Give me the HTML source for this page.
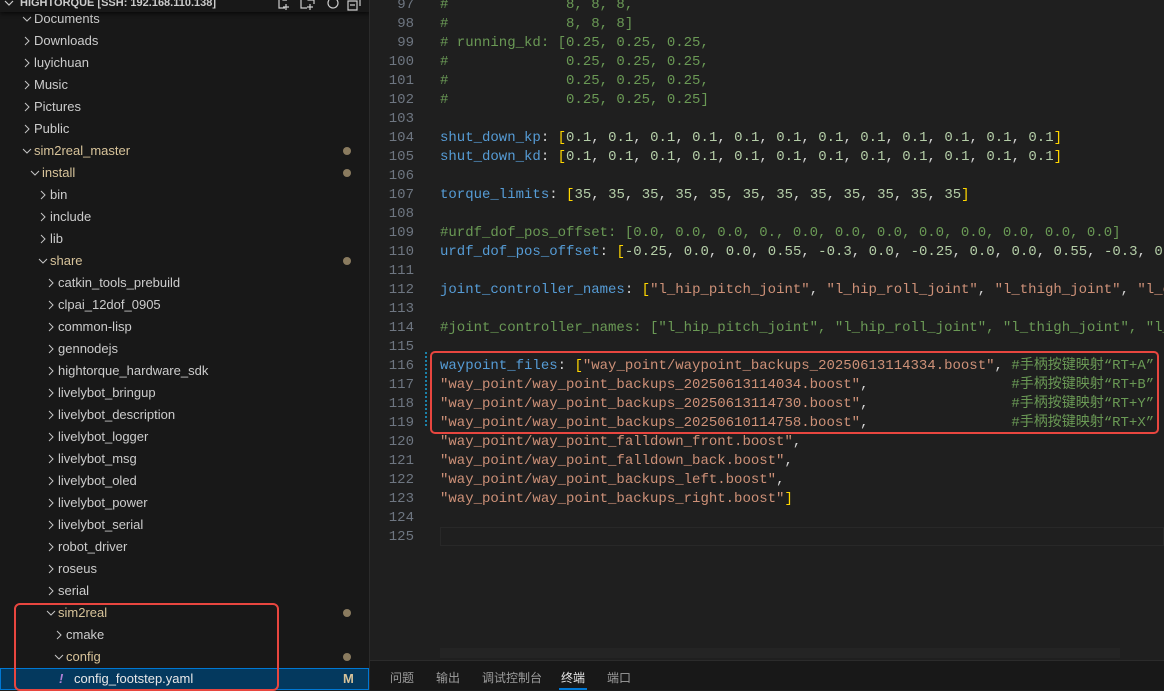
<!DOCTYPE html>
<html><head><meta charset="utf-8"><style>
*{margin:0;padding:0;box-sizing:border-box}
body{width:1164px;height:690px;overflow:hidden;background:#1f1f1f;font-family:"Liberation Sans","Noto Sans CJK SC",sans-serif;position:relative}
#side{position:absolute;left:0;top:0;width:370px;height:690px;background:#181818;overflow:hidden;border-right:1px solid #2b2b2b}
.row{position:absolute;left:0;width:369px;height:22px;line-height:22px;font-size:13px;color:#cccccc;white-space:nowrap}
.row .ch{position:absolute;top:0;color:#c5c5c5;font-size:12px}
.row .ch svg{position:absolute;top:6px}
.mod{color:#d7c39a}
.dot{position:absolute;left:343px;top:7px;width:8px;height:8px;border-radius:50%;background:#8a7b5f}
#hdr{position:absolute;left:0;top:0;width:370px;height:12px;background:#181818;box-shadow:0 2px 4px rgba(0,0,0,.6);z-index:2}
#hdr span{position:absolute;left:20px;top:-3px;font-size:11px;font-weight:bold;color:#cccccc}
#ed{position:absolute;left:370px;top:0;width:794px;height:660px;overflow:hidden;background:#1f1f1f}
.ln{position:absolute;left:0;width:44px;text-align:right;font-family:"Liberation Mono",monospace;font-size:14px;color:#6e7681;height:19px;line-height:19px}
.code{position:absolute;left:70px;font-family:"Liberation Mono",monospace;font-size:14px;height:19px;line-height:19px;white-space:pre;color:#d4d4d4}
.k{color:#569cd6}.s{color:#ce9178}.c{color:#6a9955}.n{color:#b5cea8}.b{color:#ffd700}
#panel{position:absolute;left:370px;top:660px;width:794px;height:30px;background:#181818;border-top:1px solid #2b2b2b}
#panel span{position:absolute;top:8px;font-size:12px;color:#9d9d9d}
</style></head><body>
<div id="side">
<div id="hdr"><svg style="position:absolute;left:4px;top:-1px" width="10" height="8"><path d="M1 2 L5 6 L9 2" stroke="#ccc" fill="none" stroke-width="1.2"/></svg><span>HIGHTORQUE [SSH: 192.168.110.138]</span>
<svg style="position:absolute;left:276px;top:-4px" width="90" height="16" fill="none" stroke="#ccc" stroke-width="1.2"><path d="M3 0 V12 H9 M7 0 V4 H11 M10 8 V14 M7 11 H13"/><path d="M25 2 H30 L32 4 H38 V8 M25 2 V12 H31 M34 8 V14 M31 11 H37"/><path d="M60 3 A5 5 0 1 1 53 4"/><path d="M74 3 H84 V10 M72 5 H81 V14 H72 Z M74 9 H79"/></svg></div>
<div class="row" style="top:8px"><span class="ch" style="left:22px"><svg width="10" height="10"><path d="M1 3 L5 7 L9 3" stroke="#c5c5c5" fill="none"/></svg></span><span style="position:absolute;left:34px">Documents</span></div>
<div id="rows"></div>
</div>
<div id="ed"></div>
<div id="panel"><span style="left:20px">问题</span><span style="left:66px">输出</span><span style="left:112px">调试控制台</span><span style="left:191px;color:#e7e7e7">终端</span><div style="position:absolute;left:189px;top:27px;width:28px;height:2px;background:#0078d4"></div><span style="left:237px">端口</span></div>
<div style="position:absolute;left:430px;top:351px;width:729px;height:83px;border:2px solid #e8463f;border-radius:5px"></div>
<div style="position:absolute;left:14px;top:603px;width:265px;height:88px;border:2px solid #e8463f;border-radius:6px"></div>
<script>
var R=[["Downloads",0,0],["luyichuan",0,0],["Music",0,0],["Pictures",0,0],["Public",0,0],["sim2real_master",0,1,1],["install",1,1,1],["bin",2,0],["include",2,0],["lib",2,0],["share",2,1,1],["catkin_tools_prebuild",3,0],["clpai_12dof_0905",3,0],["common-lisp",3,0],["gennodejs",3,0],["hightorque_hardware_sdk",3,0],["livelybot_bringup",3,0],["livelybot_description",3,0],["livelybot_logger",3,0],["livelybot_msg",3,0],["livelybot_oled",3,0],["livelybot_power",3,0],["livelybot_serial",3,0],["robot_driver",3,0],["roseus",3,0],["serial",3,0],["sim2real",3,1,1],["cmake",4,0],["config",4,1,1]];
var h="";
R.forEach(function(r,i){var top=30+i*22,x=22+r[1]*8;
var p=r[2]?"M1 3 L5 7 L9 3":"M3 1 L7 5 L3 9";
h+='<div class="row" style="top:'+top+'px"><span class="ch" style="left:'+x+'px"><svg width="10" height="10"><path d="'+p+'" stroke="#c5c5c5" fill="none"/></svg></span><span class="'+(r[3]?'mod':'')+'" style="position:absolute;left:'+(x+12)+'px">'+r[0]+'</span>'+(r[3]?'<div class="dot"></div>':'')+'</div>';});
h+='<div class="row" style="top:668px;background:#04395e;outline:1px solid #0078d4;outline-offset:-1px"><span style="position:absolute;left:59px;color:#b180d7;font-style:italic;font-weight:bold">!</span><span style="position:absolute;left:74px;color:#e8e8e8">config_footstep.yaml</span><span style="position:absolute;left:343px;color:#d7c39a;font-weight:bold">M</span></div>';
document.getElementById("rows").innerHTML=h;
function q(s){return '<span class="s">'+s+'</span>'}
var nums=function(a){return a.map(function(x){return '<span class="n">'+x+'</span>'}).join(', ')};
var L={97:'<span class="c">#              8, 8, 8,</span>',98:'<span class="c">#              8, 8, 8]</span>',99:'<span class="c"># running_kd: [0.25, 0.25, 0.25,</span>',100:'<span class="c">#              0.25, 0.25, 0.25,</span>',101:'<span class="c">#              0.25, 0.25, 0.25,</span>',102:'<span class="c">#              0.25, 0.25, 0.25]</span>',
104:'<span class="k">shut_down_kp</span>: <span class="b">[</span>'+nums(Array(12).fill("0.1"))+'<span class="b">]</span>',
105:'<span class="k">shut_down_kd</span>: <span class="b">[</span>'+nums(Array(12).fill("0.1"))+'<span class="b">]</span>',
107:'<span class="k">torque_limits</span>: <span class="b">[</span>'+nums(Array(12).fill("35"))+'<span class="b">]</span>',
109:'<span class="c">#urdf_dof_pos_offset: [0.0, 0.0, 0.0, 0., 0.0, 0.0, 0.0, 0.0, 0.0, 0.0, 0.0, 0.0]</span>',
110:'<span class="k">urdf_dof_pos_offset</span>: <span class="b">[</span>'+nums(["-0.25","0.0","0.0","0.55","-0.3","0.0","-0.25","0.0","0.0","0.55","-0.3","0.0"]),
112:'<span class="k">joint_controller_names</span>: <span class="b">[</span>'+q('"l_hip_pitch_joint"')+', '+q('"l_hip_roll_joint"')+', '+q('"l_thigh_joint"')+', '+q('"l_calf_joint"'),
114:'<span class="c">#joint_controller_names: ["l_hip_pitch_joint", "l_hip_roll_joint", "l_thigh_joint", "l_calf_joint"</span>',
116:'<span class="k">waypoint_files</span>: <span class="b">[</span>'+q('"way_point/waypoint_backups_20250613114334.boost"')+', <span class="c">#手柄按键映射“RT+A”</span>',
117:q('"way_point/way_point_backups_20250613114034.boost"')+',                 <span class="c">#手柄按键映射“RT+B”</span>',
118:q('"way_point/way_point_backups_20250613114730.boost"')+',                 <span class="c">#手柄按键映射“RT+Y”</span>',
119:q('"way_point/way_point_backups_20250610114758.boost"')+',                 <span class="c">#手柄按键映射“RT+X”</span>',
120:q('"way_point/way_point_falldown_front.boost"')+',',121:q('"way_point/way_point_falldown_back.boost"')+',',122:q('"way_point/way_point_backups_left.boost"')+',',123:q('"way_point/way_point_backups_right.boost"')+'<span class="b">]</span>'};
var e="";
for(var n=97;n<=125;n++){var t=-4.5+(n-97)*19;e+='<div class="ln" style="top:'+t+'px">'+n+'</div><div class="code" style="top:'+t+'px">'+(L[n]||'')+'</div>';}
e+='<div style="position:absolute;left:70px;top:527px;width:724px;height:19px;border:1px solid #282828"></div>';
e+='<div style="position:absolute;left:55px;top:352px;width:2px;height:76px;background:repeating-linear-gradient(#1b81a8 0 2px,transparent 2px 4px)"></div>';
e+='<div style="position:absolute;left:70px;top:648px;width:680px;height:10px;background:#242424"></div>';
document.getElementById("ed").innerHTML=e;
</script>
</body></html>
